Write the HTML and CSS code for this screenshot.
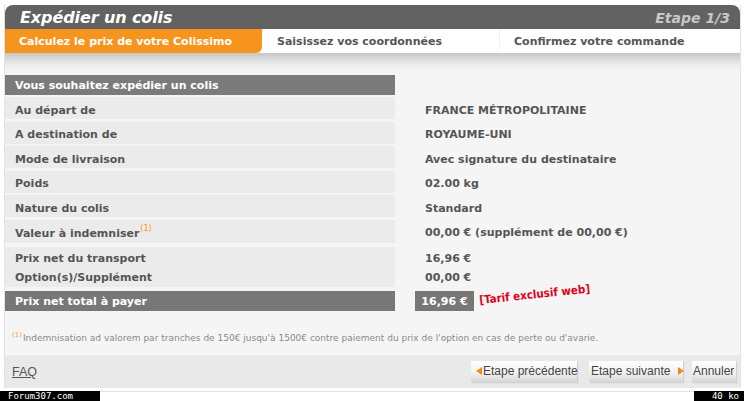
FILE: index.html
```html
<!DOCTYPE html>
<html lang="fr">
<head>
<meta charset="utf-8">
<title>Expédier un colis</title>
<link rel="stylesheet" href="styles.css">
</head>
<body>
<div class="page">
  <div class="panel">
    <div class="head">
      <h1 class="title">Expédier un colis</h1>
      <span class="step">Etape 1/3</span>
    </div>
    <div class="tabs">
      <div class="tab tab-active">Calculez le prix de votre Colissimo</div>
      <div class="tab tab-mid">Saisissez vos coordonnées</div>
      <div class="tab tab-last">Confirmez votre commande</div>
    </div>
    <div class="body">
      <div class="grid">
        <div class="cell-head">Vous souhaitez expédier un colis</div><div></div>
        <div class="label">Au départ de</div><div class="value">FRANCE MÉTROPOLITAINE</div>
        <div class="label">A destination de</div><div class="value">ROYAUME-UNI</div>
        <div class="label">Mode de livraison</div><div class="value">Avec signature du destinataire</div>
        <div class="label">Poids</div><div class="value">02.00 kg</div>
        <div class="label">Nature du colis</div><div class="value">Standard</div>
        <div class="label label-tall">Valeur à indemniser<sup class="ref">(1)</sup></div><div class="value">00,00 € (supplément de 00,00 €)</div>
        <div class="label label-double"><span>Prix net du transport</span><span>Option(s)/Supplément</span></div>
        <div class="value value-double"><span>16,96 €</span><span>00,00 €</span></div>
        <div class="total-label">Prix net total à payer</div>
        <div class="total-value"><span class="total-box">16,96 €</span><span class="promo">[Tarif exclusif web]</span></div>
      </div>
      <p class="note"><sup class="ref ref-small">(1)</sup>Indemnisation ad valorem par tranches de 150€ jusqu'à 1500€ contre paiement du prix de l'option en cas de perte ou d'avarie.</p>
    </div>
    <div class="foot">
      <a class="faq" href="#">FAQ</a>
      <div class="actions">
        <button class="btn btn-prev" type="button"><span class="tri tri-left"></span>Etape précédente</button>
        <button class="btn btn-next" type="button">Etape suivante<span class="tri tri-right"></span></button>
        <button class="btn btn-cancel" type="button">Annuler</button>
      </div>
    </div>
  </div>
  <div class="status">
    <span class="badge">Forum307.com</span>
    <span class="badge badge-right">40 ko</span>
  </div>
</div>
</body>
</html>
```
FILE: styles.css
```css
* { box-sizing: border-box; }
html, body { margin: 0; padding: 0; background: #fff; }
body {
  font-family: "DejaVu Sans", Verdana, sans-serif;
  color: #555;
  width: 744px;
  height: 401px;
  overflow: hidden;
}
.page { padding-top: 5px; }
.panel {
  margin: 0 4px 0 5px;
  box-shadow: -1px 0 0 #e2e2e2, 1px 0 0 #e2e2e2;
}
.head {
  height: 24px;
  background: #626262;
  border-radius: 8px 8px 0 0;
  display: flex;
  align-items: center;
  justify-content: space-between;
  padding: 0 10px 0 15px;
}
.title {
  margin: 0;
  font-size: 16px;
  font-style: italic;
  font-weight: bold;
  color: #fff;
  letter-spacing: -0.1px;
  padding-top: 1px;
}
.step {
  font-size: 14px;
  font-style: italic;
  font-weight: bold;
  color: #c8c8c8;
  padding-top: 1px;
}
.tabs {
  height: 24px;
  background: #fff;
  display: flex;
  align-items: center;
  font-size: 11px;
  font-weight: bold;
  color: #555;
}
.tab { height: 100%; display: flex; align-items: center; padding-top: 1px; }
.tab-active {
  width: 257px;
  background: #f7941e;
  color: #fff;
  padding-left: 14px;
  border-radius: 0 0 6px 0;
}
.tab-mid {
  width: 238px;
  padding-left: 15px;
  border-right: 1px solid #efefef;
  border-radius: 0 0 8px 0;
}
.tab-last { padding-left: 14px; }
.body {
  background: linear-gradient(#c6c6c6 0, #ededed 12px, #f5f5f5 18px);
  padding: 22px 0 0 0;
  height: 301px;
}
.grid {
  display: grid;
  grid-template-columns: 390px 1fr;
  column-gap: 10px;
  row-gap: 2.5px;
  font-size: 11px;
  font-weight: bold;
  color: #555;
}
.cell-head {
  background: #7b7b7b;
  color: #fff;
  height: 20px;
  line-height: 20px;
  padding: 1px 0 0 10px;
  margin-bottom: -0.5px;
}
.label {
  background: #ebebeb;
  height: 22px;
  line-height: 22px;
  padding: 2.5px 0 0 10px;
}
.label-tall { height: 23.5px; line-height: 23px; }
.value {
  height: 22px;
  line-height: 22px;
  padding: 2.5px 0 0 20px;
}
.label-double, .value-double {
  height: 40px;
  display: flex;
  flex-direction: column;
  justify-content: center;
  line-height: 19px;
  margin-top: 1.5px;
  padding-top: 1px;
}
.label-double span, .value-double span { display: block; }
.ref {
  color: #f7941e;
  font-size: 8px;
  font-weight: normal;
  vertical-align: 6px;
  line-height: 0;
  margin-left: 1px;
}
.total-label {
  background: #777;
  color: #fff;
  height: 20px;
  line-height: 20px;
  padding: 1px 0 0 10px;
  margin-top: 1.5px;
}
.total-value {
  display: flex;
  align-items: flex-start;
  height: 20px;
  margin-top: 1.5px;
  padding-left: 10px;
}
.total-box {
  background: #777;
  color: #fff;
  height: 20px;
  line-height: 21px;
  width: 59px;
  text-align: center;
}
.promo {
  font-family: "DejaVu Sans Condensed", "DejaVu Sans", sans-serif;
  color: #e2001a;
  font-size: 11.5px;
  transform: rotate(-6deg);
  transform-origin: left bottom;
  margin: 0 0 0 6px;
  line-height: 14px;
  padding-top: 2px;
  white-space: nowrap;
}
.note {
  margin: 22px 0 0 7px;
  font-size: 9px;
  color: #8a8a8a;
}
.ref-small { font-size: 7px; vertical-align: 4px; margin-right: 1px; margin-left: 0; }
.foot {
  height: 34px;
  background: #e9e9e9;
  display: flex;
  align-items: center;
  justify-content: space-between;
  padding: 0 4px 0 7px;
  border-top: 1px solid #fafafa;
}
.faq {
  font-family: "Liberation Sans", Arial, sans-serif;
  font-size: 12.5px;
  color: #555;
  text-decoration: underline;
  margin-top: 1px;
}
.actions { display: flex; gap: 12px; align-items: center; margin-top: -1px; }
.btn {
  font-family: "Liberation Sans", Arial, sans-serif;
  font-size: 12px;
  color: #444;
  border: 0;
  height: 21px;
  padding: 0 4px;
  background: linear-gradient(#ffffff 0, #f2f2f2 55%, #d6d6d6 100%);
  box-shadow: 1px 1px 1px #d0d0d0;
  display: flex;
  align-items: center;
  gap: 1px;
  white-space: nowrap;
}
.btn-prev { width: 106px; padding-left: 5px; }
.btn-next { width: 94px; padding-left: 2px; gap: 0; }
.btn-next .tri-right { margin-left: 8px; }
.btn-cancel { width: 44px; padding: 0 1px; margin-left: -3px; }
.tri { display: inline-block; flex: none; width: 0; height: 0; border-top: 4.5px solid transparent; border-bottom: 4.5px solid transparent; }
.tri-left { border-right: 6px solid #f08a1c; }
.tri-right { border-left: 6px solid #f08a1c; }
.status {
  margin-top: 3px;
  display: flex;
  justify-content: space-between;
  align-items: flex-end;
  border-top: 1px solid #e4e4e4;
  height: 10px;
}
.badge {
  background: #000;
  color: #fff;
  font-family: "DejaVu Sans Mono", monospace;
  font-size: 9px;
  line-height: 10px;
  height: 10px;
  width: 100px;
  padding-left: 8px;
}
.badge-right { width: 50px; text-align: right; padding: 0 5px 0 0; }
```
